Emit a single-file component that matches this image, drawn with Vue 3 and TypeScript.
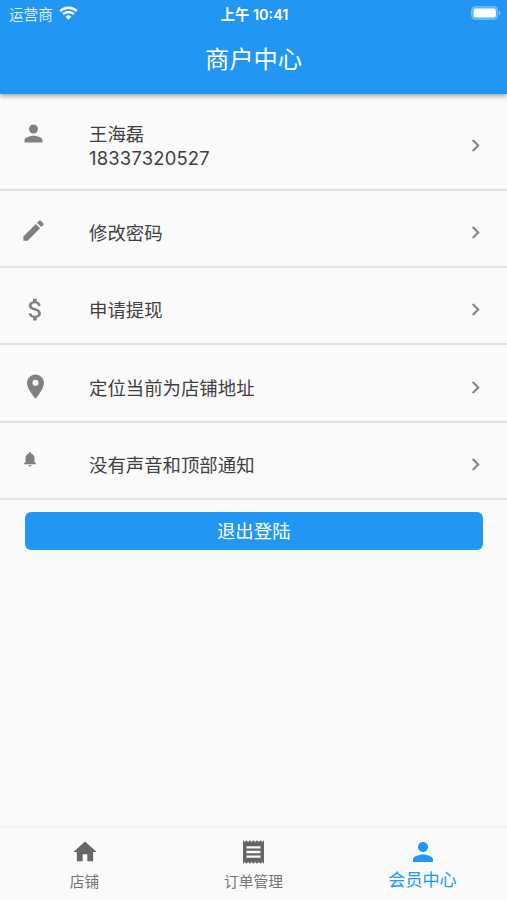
<script setup lang="ts">
interface Row {
  lines: string[]
  icon: string
  kind: string
}

interface Tab {
  label: string
  icon: string
  kind: string
  active?: boolean
}

const person =
  'M12 12c2.21 0 4-1.79 4-4s-1.79-4-4-4-4 1.79-4 4 1.79 4 4 4zm0 2c-2.67 0-8 1.34-8 4v2h16v-2c0-2.66-5.33-4-8-4z'

const rows: Row[] = [
  { lines: ['王海磊', '18337320527'], kind: 'person', icon: person },
  {
    lines: ['修改密码'],
    kind: 'edit',
    icon: 'M3 17.25V21h3.75L17.81 9.94l-3.75-3.75L3 17.25zM20.71 7.04a1 1 0 0 0 0-1.41l-2.34-2.34a1 1 0 0 0-1.41 0l-1.83 1.83 3.75 3.75 1.83-1.83z',
  },
  {
    lines: ['申请提现'],
    kind: 'money',
    icon: 'M11.8 10.9c-2.27-.59-3-1.2-3-2.15 0-1.09 1.01-1.85 2.7-1.85 1.78 0 2.44.85 2.5 2.1h2.21c-.07-1.72-1.12-3.3-3.21-3.81V3h-3v2.16c-1.94.42-3.5 1.68-3.5 3.61 0 2.31 1.91 3.46 4.7 4.13 2.5.6 3 1.48 3 2.41 0 .69-.49 1.79-2.7 1.79-2.06 0-2.87-.92-2.98-2.1h-2.2c.12 2.19 1.76 3.42 3.68 3.83V21h3v-2.15c1.95-.37 3.5-1.5 3.5-3.55 0-2.84-2.43-3.81-4.7-4.4z',
  },
  {
    lines: ['定位当前为店铺地址'],
    kind: 'place',
    icon: 'M12 2C8.13 2 5 5.13 5 9c0 5.25 7 13 7 13s7-7.75 7-13c0-3.87-3.13-7-7-7zm0 9.5a2.5 2.5 0 0 1 0-5 2.5 2.5 0 0 1 0 5z',
  },
  {
    lines: ['没有声音和顶部通知'],
    kind: 'bell',
    icon: 'M12 22c1.1 0 2-.9 2-2h-4c0 1.1.89 2 2 2zm6-6v-5c0-3.07-1.64-5.64-4.5-6.32V4c0-.83-.67-1.5-1.5-1.5s-1.5.67-1.5 1.5v.68C7.63 5.36 6 7.92 6 11v5l-2 2v1h16v-1l-2-2z',
  },
]

const tabs: Tab[] = [
  { label: '店铺', kind: 'home', icon: 'M10 20v-6h4v6h5v-8h3L12 3 2 12h3v8z' },
  {
    label: '订单管理',
    kind: 'receipt',
    icon: 'M18 17H6v-2h12v2zm0-4H6v-2h12v2zm0-4H6V7h12v2zM3 22l1.5-1.5L6 22l1.5-1.5L9 22l1.5-1.5L12 22l1.5-1.5L15 22l1.5-1.5L18 22l1.5-1.5L21 22V2l-1.5 1.5L18 2l-1.5 1.5L15 2l-1.5 1.5L12 2l-1.5 1.5L9 2 7.5 3.5 6 2 4.5 3.5 3 2v20z',
  },
  { label: '会员中心', kind: 'member', icon: person, active: true },
]
</script>

<template>
  <div class="screen">
    <header class="top">
      <div class="status">
        <div class="carrier">
          <span>运营商</span>
          <svg class="wifi" viewBox="0 0 19 14">
            <path d="M1.2 5.2a11.8 11.8 0 0 1 16.6 0" />
            <path d="M4.1 8.2a7.7 7.7 0 0 1 10.8 0" />
            <path class="dot" d="M9.5 13.8l-2.9-3a4.1 4.1 0 0 1 5.8 0z" />
          </svg>
        </div>
        <div class="clock">上午 10:41</div>
        <div class="power">
          <svg class="battery" viewBox="0 0 30 14">
            <rect class="shell" x="0.7" y="0.7" width="26" height="12.6" rx="3.6" />
            <rect class="charge" x="2.6" y="2.6" width="22.2" height="8.8" rx="2" />
            <path class="cap" d="M28 4.8c2 .8 2 3.6 0 4.4z" />
          </svg>
        </div>
      </div>
      <h1 class="title">商户中心</h1>
    </header>

    <main class="content">
      <div v-for="row in rows" :key="row.kind" class="row" :class="'row-' + row.kind">
        <div class="lead">
          <svg class="icon" :class="'icon-' + row.kind" viewBox="0 0 24 24"><path :d="row.icon" /></svg>
        </div>
        <div class="text">
          <div v-for="line in row.lines" :key="line" class="line">{{ line }}</div>
        </div>
        <svg class="chevron" viewBox="0 0 24 24">
          <path d="M8.59 16.59L13.17 12 8.59 7.41 10 6l6 6-6 6z" />
        </svg>
      </div>
      <button class="logout" type="button">退出登陆</button>
    </main>

    <nav class="tabs">
      <div v-for="tab in tabs" :key="tab.kind" class="tab" :class="{ active: tab.active }">
        <svg class="tab-icon" :class="'tab-' + tab.kind" viewBox="0 0 24 24"><path :d="tab.icon" /></svg>
        <span class="tab-label">{{ tab.label }}</span>
      </div>
    </nav>
  </div>
</template>

<style>
body {
  background: #fafafa;
}
</style>

<style scoped>
.screen {
  height: 900px;
  display: flex;
  flex-direction: column;
  overflow: hidden;
  background: #fafafa;
  font-family: Inter, 'Noto Sans CJK SC', sans-serif;
  color: #3f3f3f;
}

.top {
  flex: none;
  height: 94px;
  background: #2196f3;
  color: #fff;
  box-shadow: 0 2px 5px rgba(0, 0, 0, 0.36);
}

.status {
  height: 26px;
  display: grid;
  grid-template-columns: 1fr auto 1fr;
  align-items: center;
  padding: 0 6px 0 9px;
  font-size: 14.6px;
}

.carrier {
  display: flex;
  align-items: center;
  gap: 6px;
  color: #dceeff;
}

.wifi {
  width: 19px;
  height: 14px;
  fill: none;
  stroke: #fff;
  stroke-width: 2.4;
}

.wifi .dot {
  fill: #fff;
  stroke: none;
}

.clock {
  padding-right: 1px;
  font-size: 14.4px;
  font-weight: 600;
}

.power {
  display: flex;
  justify-content: flex-end;
}

.battery {
  width: 30px;
  height: 14px;
  fill: #fff;
}

.shell {
  fill: #5cb1f6;
  stroke: #7cc0f8;
  stroke-width: 1;
}

.cap {
  fill: #8cc8f9;
}

.title {
  margin: 0;
  height: 67px;
  line-height: 67px;
  text-align: center;
  font-size: 24.3px;
  font-weight: 400;
}

.content {
  flex: 1;
}

.row {
  box-sizing: border-box;
  height: 77.35px;
  display: flex;
  align-items: center;
  padding: 8px 19.5px 0 20px;
  border-bottom: 2px solid #e4e4e4;
}

.row-person {
  height: 96.8px;
}

.lead {
  width: 69px;
  display: flex;
}

.icon {
  width: 27px;
  height: 27px;
  fill: #808080;
}

.icon-person {
  margin-bottom: 23px;
}

.icon-edit {
  margin-bottom: 4px;
}

.icon-money,
.icon-place {
  width: 29px;
  height: 29px;
  margin: 0 0 1px 0.8px;
}

.icon-bell {
  width: 18px;
  height: 18px;
  margin: 0 0 11px 1px;
}

.text {
  flex: 1;
  padding-top: 1px;
  font-size: 18.4px;
}

.line {
  height: 24px;
  line-height: 24px;
}

.row-person .line:last-child {
  letter-spacing: 0.2px;
}

.chevron {
  width: 25px;
  height: 25px;
  fill: #858585;
}

.logout {
  display: block;
  width: 457.5px;
  height: 38px;
  margin: 11.8px 0 0 25px;
  padding: 0;
  border: 0;
  border-radius: 6px;
  background: #2196f3;
  color: #fff;
  font-family: inherit;
  font-size: 18.4px;
  line-height: 38px;
}

.tabs {
  flex: none;
  box-sizing: border-box;
  height: 74px;
  display: grid;
  grid-template-columns: repeat(3, 1fr);
  border-top: 2px solid #f2f2f2;
}

.tab {
  display: flex;
  flex-direction: column;
  align-items: center;
  padding-top: 10px;
  color: #757575;
  font-size: 14.7px;
}

.tab-icon {
  width: 28px;
  height: 28px;
  fill: #666;
}

.tab-receipt {
  width: 29px;
}

.tab-member {
  width: 30px;
  height: 30px;
  margin: -1px 0;
}

.tab-label {
  height: 24px;
  line-height: 32px;
}

.active {
  color: #2196f3;
  font-size: 17.1px;
}

.active .tab-icon {
  fill: #2196f3;
}

.active .tab-label {
  line-height: 28px;
}
</style>
